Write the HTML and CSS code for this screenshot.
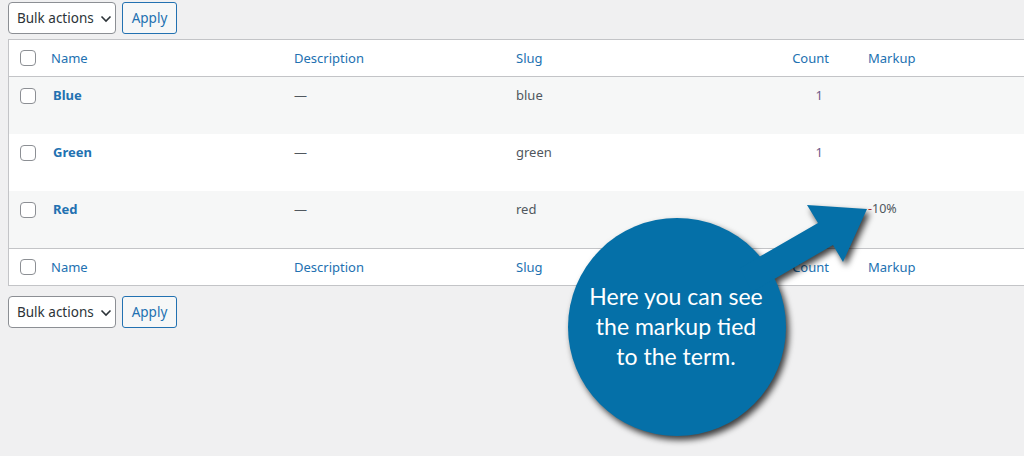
FILE: index.html
```html
<!DOCTYPE html>
<html>
<head>
<meta charset="utf-8">
<link rel="stylesheet" href="styles.css">
</head>
<body>
<div class="page">
  <div class="tablenav">
    <div class="select">Bulk actions<svg class="chev" viewBox="0 0 12 8" width="12" height="8"><path d="M1.5 1.5 L6 6 L10.5 1.5" fill="none" stroke="#2c3338" stroke-width="1.6"/></svg></div>
    <div class="btn">Apply</div>
  </div>
  <div class="table">
    <div class="row head">
      <div class="cb"><span class="box"></span></div>
      <div class="cell link">Name</div>
      <div class="cell link">Description</div>
      <div class="cell link">Slug</div>
      <div class="cell link count">Count</div>
      <div class="cell link">Markup</div>
    </div>
    <div class="row alt">
      <div class="cb"><span class="box"></span></div>
      <div class="cell name">Blue</div>
      <div class="cell">—</div>
      <div class="cell">blue</div>
      <div class="cell num">1</div>
      <div class="cell"></div>
    </div>
    <div class="row">
      <div class="cb"><span class="box"></span></div>
      <div class="cell name">Green</div>
      <div class="cell">—</div>
      <div class="cell">green</div>
      <div class="cell num">1</div>
      <div class="cell"></div>
    </div>
    <div class="row alt">
      <div class="cb"><span class="box"></span></div>
      <div class="cell name">Red</div>
      <div class="cell">—</div>
      <div class="cell">red</div>
      <div class="cell num"></div>
      <div class="cell markup"><span class="neg">-</span>10%</div>
    </div>
    <div class="row head foot">
      <div class="cb"><span class="box"></span></div>
      <div class="cell link">Name</div>
      <div class="cell link">Description</div>
      <div class="cell link">Slug</div>
      <div class="cell link count">Count</div>
      <div class="cell link">Markup</div>
    </div>
  </div>
  <div class="tablenav bottom">
    <div class="select">Bulk actions<svg class="chev" viewBox="0 0 12 8" width="12" height="8"><path d="M1.5 1.5 L6 6 L10.5 1.5" fill="none" stroke="#2c3338" stroke-width="1.6"/></svg></div>
    <div class="btn">Apply</div>
  </div>
</div>
<div class="callout">
  <svg class="callout-shape" width="1024" height="456" viewBox="0 0 1024 456">
    <circle cx="677" cy="327" r="109" fill="#0570a8"/>
    <polygon points="740,268 818,223 807,205 867,209 843,262 833,245 752,292" fill="#0570a8"/>
  </svg>
  <div class="callout-text">Here you can see<br>the markup tied<br>to the term.</div>
</div>
</body>
</html>
```
FILE: styles.css
```css
html, body {
  margin: 0;
  padding: 0;
  background: #f0f0f1;
  overflow: hidden;
  width: 1024px;
  height: 456px;
}
body {
  font-family: "Noto Sans", "Open Sans", sans-serif;
  font-size: 13px;
  color: #50575e;
  position: relative;
}
.page {
  padding: 2px 0 0 8px;
}
.tablenav {
  display: flex;
  gap: 6px;
  height: 32px;
  margin-bottom: 5px;
}
.tablenav.bottom {
  margin-top: 10px;
}
.select {
  box-sizing: border-box;
  width: 108px;
  height: 32px;
  border: 1px solid #8c8f94;
  border-radius: 4px;
  background: #fff;
  color: #2c3338;
  font-size: 13.5px;
  display: flex;
  align-items: center;
  padding-left: 8px;
  gap: 6px;
}
.chev { margin-top: 1px; }
.btn {
  box-sizing: border-box;
  width: 55px;
  height: 32px;
  border: 1px solid #2271b1;
  border-radius: 3px;
  background: #f6f7f7;
  color: #2271b1;
  font-size: 13.5px;
  display: flex;
  align-items: center;
  justify-content: center;
}
.table {
  width: 1030px;
  background: #fff;
  border: 1px solid #c3c4c7;
  border-right: none;
}
.row {
  display: grid;
  grid-template-columns: 34px 243px 222px 248px 104px 1fr;
  height: 57px;
  align-items: start;
}
.row.alt { background: #f6f7f7; }
.row.head {
  height: 36px;
  align-items: center;
  border-bottom: 1px solid #c3c4c7;
}
.row.foot {
  border-bottom: none;
  border-top: 1px solid #c3c4c7;
}
.cb {
  padding-left: 11px;
  height: 16px;
}
.row:not(.head) .cb { margin-top: 11px; }
.box {
  display: block;
  box-sizing: border-box;
  width: 16px;
  height: 16px;
  border: 1px solid #8c8f94;
  border-radius: 4px;
  background: #fff;
}
.cell {
  padding-left: 8px;
  font-size: 13px;
  line-height: 20px;
  white-space: nowrap;
}
.row:not(.head) .cell { margin-top: 8px; }
.link { color: #2271b1; }
.name {
  color: #2271b1;
  font-weight: 700;
  padding-left: 10px;
}
.count {
  text-align: right;
  padding-right: 31px;
}
.num {
  text-align: right;
  padding-right: 37px;
  color: #6d5a8a;
}
.markup { color: #50575e; font-size: 12.5px; }
.neg { color: #b32d2e; }
.callout {
  position: absolute;
  left: 0;
  top: 0;
  width: 1024px;
  height: 456px;
  pointer-events: none;
}
.callout-shape {
  position: absolute;
  left: 0;
  top: 0;
  filter: drop-shadow(3px 4px 3px rgba(0,0,0,0.75));
}
.callout-text {
  position: absolute;
  left: 576px;
  top: 281px;
  width: 200px;
  text-align: center;
  color: #fff;
  font-family: "Lato", "Open Sans", sans-serif;
  font-size: 23px;
  line-height: 30px;
}
```
